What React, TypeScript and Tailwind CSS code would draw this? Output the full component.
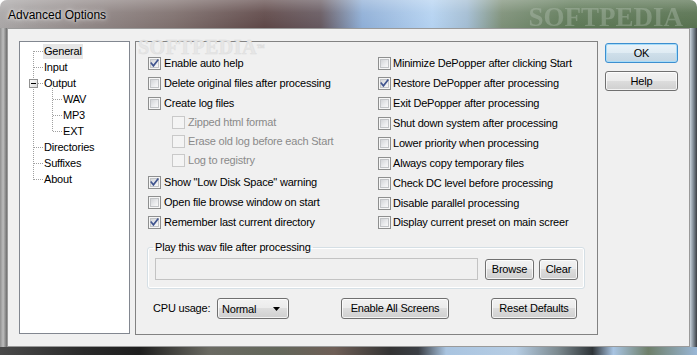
import React from "react";

type Opt = { label: string; checked?: boolean; disabled?: boolean; indent?: boolean; mt: string };

const leftOpts: Opt[] = [
  { label: "Enable auto help", checked: true, mt: "mt-0" },
  { label: "Delete original files after processing", mt: "mt-[7px]" },
  { label: "Create log files", mt: "mt-[7px]" },
  { label: "Zipped html format", disabled: true, indent: true, mt: "mt-[6px]" },
  { label: "Erase old log before each Start", disabled: true, indent: true, mt: "mt-[6px]" },
  { label: "Log to registry", disabled: true, indent: true, mt: "mt-[6px]" },
  { label: 'Show "Low Disk Space" warning', checked: true, mt: "mt-[9px]" },
  { label: "Open file browse window on start", mt: "mt-[7px]" },
  { label: "Remember last current directory", checked: true, mt: "mt-[7px]" },
];

const rightOpts: Opt[] = [
  { label: "Minimize DePopper after clicking Start", mt: "mt-0" },
  { label: "Restore DePopper after processing", checked: true, mt: "mt-[7px]" },
  { label: "Exit DePopper after processing", mt: "mt-[7px]" },
  { label: "Shut down system after processing", mt: "mt-[7px]" },
  { label: "Lower priority when processing", mt: "mt-[7px]" },
  { label: "Always copy temporary files", mt: "mt-[7px]" },
  { label: "Check DC level before processing", mt: "mt-[7px]" },
  { label: "Disable parallel processing", mt: "mt-[7px]" },
  { label: "Display current preset on main screer", mt: "mt-[6px]" },
];

function Box({ checked, disabled }: { checked?: boolean; disabled?: boolean }) {
  if (disabled) {
    return <div className="w-[13px] h-[13px] shrink-0 border border-[#c9c9c9] bg-[#f4f4f4]" />;
  }
  return (
    <div className="relative w-[13px] h-[13px] shrink-0 border border-[#8e8f8f] bg-[#f6f6f6] p-px">
      <div className="w-full h-full border border-[#c2c4c7] bg-[linear-gradient(135deg,#d3d5d8_0%,#ebecee_60%,#f8f8f8_100%)]" />
      {checked && (
        <svg className="absolute left-0 top-0 w-[11px] h-[11px]" viewBox="0 0 11 11">
          <path d="M2.3 5.2 L4.4 7.8 L8.8 2.2" fill="none" stroke="#41558f" strokeWidth="1.7" strokeLinecap="square" />
        </svg>
      )}
    </div>
  );
}

function Row({ o, gap }: { o: Opt; gap: string }) {
  return (
    <div className={`flex items-center h-[13px] ${o.mt} ${o.indent ? "pl-[24px]" : ""}`}>
      <Box checked={o.checked} disabled={o.disabled} />
      <span className={`${gap} leading-[13px] whitespace-nowrap ${o.disabled ? "text-[#8a8a8a]" : "text-black"}`}>{o.label}</span>
    </div>
  );
}

function Btn({ children, w, h = "h-[21px]", def }: { children: React.ReactNode; w: string; h?: string; def?: boolean }) {
  return (
    <div
      className={`${w} ${h} shrink-0 flex items-center justify-center rounded-[3px] border ${
        def
          ? "border-[#3c8fd0] bg-[linear-gradient(180deg,#eaf3f9_0%,#dfebf3_50%,#cfdfea_50%,#c4d6e3_100%)] shadow-[inset_0_0_0_1px_#a8dcf8]"
          : "border-[#707070] bg-[linear-gradient(180deg,#f2f2f2_0%,#ebebeb_50%,#dddddd_50%,#cfcfcf_100%)] shadow-[inset_0_0_0_1px_rgba(255,255,255,0.75)]"
      } text-black leading-[13px] whitespace-nowrap`}
    >
      {children}
    </div>
  );
}

const treeItems: { label: string; sub?: boolean; sel?: boolean }[] = [
  { label: "General", sel: true },
  { label: "Input" },
  { label: "Output" },
  { label: "WAV", sub: true },
  { label: "MP3", sub: true },
  { label: "EXT", sub: true },
  { label: "Directories" },
  { label: "Suffixes" },
  { label: "About" },
];

function TreeLines() {
  const d = "1 1";
  const c = "#a0a0a0";
  const hTop = [9, 25, 105, 121, 137];
  const hSub = [57, 73, 89];
  return (
    <svg className="absolute left-0 top-0 w-[109px] h-[160px]" viewBox="0 0 109 160" shapeRendering="crispEdges">
      <line x1="13.5" y1="9" x2="13.5" y2="138" stroke={c} strokeDasharray={d} />
      {hTop.map((y) => (
        <line key={y} x1="14" y1={y + 0.5} x2="23" y2={y + 0.5} stroke={c} strokeDasharray={d} />
      ))}
      <line x1="18" y1="41.5" x2="23" y2="41.5" stroke={c} strokeDasharray={d} />
      <line x1="32.5" y1="46" x2="32.5" y2="90" stroke={c} strokeDasharray={d} />
      {hSub.map((y) => (
        <line key={y} x1="33" y1={y + 0.5} x2="42" y2={y + 0.5} stroke={c} strokeDasharray={d} />
      ))}
      <defs>
        <linearGradient id="mb" x1="0" y1="0" x2="1" y2="1">
          <stop offset="0" stopColor="#ffffff" />
          <stop offset="1" stopColor="#d8d8d8" />
        </linearGradient>
      </defs>
      <rect x="9.5" y="37.5" width="8" height="8" fill="url(#mb)" stroke="#919191" />
      <line x1="11" y1="41.5" x2="16" y2="41.5" stroke="#000" />
    </svg>
  );
}

export default function App() {
  return (
    <div className="w-[697px] h-[355px] overflow-hidden bg-white">
      <div className="w-[697px] h-[355px] flex flex-col rounded-t-[7px] overflow-hidden font-['Liberation_Sans',Arial,sans-serif] text-[11px] tracking-[-0.2px] text-black">
        {/* title bar */}
        <div className="relative h-[28px] shrink-0 flex items-center pl-[8px] pt-[2px] bg-[linear-gradient(90deg,#a9a6a6_0%,#918887_12%,#7d6e6c_25%,#5e4747_38%,#65585f_46%,#8eaed6_52%,#b4d2f1_62%,#a2bcd2_67%,#7c8f77_72%,#5d7856_82%,#57714f_100%)]">
          <div className="absolute inset-0 bg-[linear-gradient(180deg,rgba(255,255,255,0.28)_0%,rgba(255,255,255,0.08)_45%,rgba(255,255,255,0)_100%)]" />
          <span className="absolute right-[14px] top-[4px] font-['Liberation_Serif',serif] font-bold text-[27px] leading-[26px] tracking-[0px] text-[rgba(190,200,190,0.35)] blur-[0.7px]">
            SOFTPEDIA
          </span>
          <span className="relative text-[12px] tracking-normal text-black [text-shadow:0_0_6px_rgba(255,255,255,0.9),0_0_3px_rgba(255,255,255,0.8)]">
            Advanced Options
          </span>
        </div>

        {/* middle */}
        <div className="flex h-[319px] shrink-0">
          <div className="w-[7px] h-full bg-[linear-gradient(90deg,#8f8f8f_0%,#bdbdbd_45%,#6d6d6d_100%)]" />
          <div className="w-[683px] h-full border border-[#9a9a9a] bg-[#f0f0f0] flex pl-[11px] pt-[12px]">
            {/* tree */}
            <div className="relative w-[111px] h-[293px] shrink-0 border border-[#828790] bg-white pt-px">
              <TreeLines />
              <div className="relative flex flex-col">
                {treeItems.map((t) => (
                  <div key={t.label} className={`h-[16px] flex items-center ${t.sub ? "pl-[42px]" : "pl-[23px]"}`}>
                    <span className={`px-px h-[15px] leading-[15px] ${t.sel ? "bg-[#e6e6e6]" : ""}`}>{t.label}</span>
                  </div>
                ))}
              </div>
            </div>

            {/* options panel */}
            <div className="relative ml-[5px] w-[463px] h-[294px] shrink-0 border border-[#828282] pt-[15px]">
              <div className="absolute left-[2px] top-[-2px] font-['Liberation_Serif',serif] font-bold text-[20px] leading-[15px] tracking-[0.5px] text-[#e6e6e6] [-webkit-text-stroke:0.5px_#dedede]">
                SOFTPEDIA<span className="text-[8px] align-top">™</span>
              </div>

              <div className="relative flex">
                <div className="w-[242px] pl-[12px] flex flex-col">
                  {leftOpts.map((o) => (
                    <Row key={o.label} o={o} gap="ml-[3px]" />
                  ))}
                </div>
                <div className="flex flex-col">
                  {rightOpts.map((o) => (
                    <Row key={o.label} o={o} gap="ml-[2px]" />
                  ))}
                </div>
              </div>

              <fieldset className="relative ml-[11px] mt-[12px] w-[438px] border border-[#d5dfe5] rounded-[3px] shadow-[inset_0_0_0_1px_#ffffff] pb-[8px]">
                <legend className="ml-[5px] px-[2px] leading-[13px]">Play this wav file after processing</legend>
                <div className="flex items-center pl-[7px] mt-[4px]">
                  <div className="w-[323px] h-[22px] border border-[#c3c3c3] bg-[#f0f0f0]" />
                  <div className="ml-[7px]">
                    <Btn w="w-[49px]">Browse</Btn>
                  </div>
                  <div className="ml-[5px]">
                    <Btn w="w-[39px]">Clear</Btn>
                  </div>
                </div>
              </fieldset>

              <div className="relative flex items-center mt-[9px] pl-[17px] h-[21px]">
                <span className="w-[64px] shrink-0 leading-[13px]">CPU usage:</span>
                <div className="w-[72px] h-[21px] shrink-0 flex items-center justify-between pl-[4px] pr-[8px] pt-[2px] rounded-[3px] border border-[#707070] bg-[linear-gradient(180deg,#f2f2f2_0%,#ebebeb_50%,#dddddd_50%,#cfcfcf_100%)] shadow-[inset_0_0_0_1px_rgba(255,255,255,0.75)]">
                  <span className="leading-[13px]">Normal</span>
                  <svg width="7" height="4" viewBox="0 0 7 4" className="mb-[2px]">
                    <path d="M0 0 H7 L3.5 4 Z" fill="#000" />
                  </svg>
                </div>
                <div className="ml-[52px]">
                  <Btn w="w-[108px]">Enable All Screens</Btn>
                </div>
                <div className="ml-[42px]">
                  <Btn w="w-[86px]">Reset Defaults</Btn>
                </div>
              </div>
            </div>

            {/* right buttons */}
            <div className="ml-[7px] flex flex-col pt-[2px]">
              <Btn w="w-[73px]" h="h-[20px]" def>
                OK
              </Btn>
              <div className="mt-[8px]">
                <Btn w="w-[73px]" h="h-[20px]">
                  Help
                </Btn>
              </div>
            </div>
          </div>
          <div className="w-[7px] h-full bg-[linear-gradient(90deg,#c9d3dc_0%,#7f8a94_50%,#3b3f44_100%)]" />
        </div>

        {/* bottom frame */}
        <div className="h-[8px] shrink-0 bg-[linear-gradient(90deg,#4a4a4a_0%,#2a2a2a_12%,#1e1e1e_20%,#6a6a62_30%,#62665a_40%,#6e5e56_48%,#333333_56%,#3a3e44_60%,#a9c4e0_64%,#b6cde4_74%,#7c8a90_80%,#2e3438_85%,#a8c4e2_88%,#6e7f6a_93%,#9ab7d6_100%)]" />
      </div>
    </div>
  );
}
